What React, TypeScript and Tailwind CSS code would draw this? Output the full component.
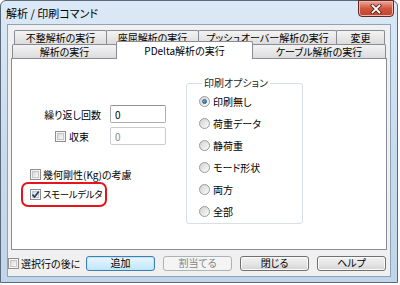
import React from "react";

const CheckBox: React.FC<{ checked?: boolean }> = ({ checked }) => (
    <span className="inline-flex w-[11px] h-[11px] shrink-0 border border-[#8f8f8f] bg-[#f4f4f4] p-px">
        <span className="flex w-full h-full items-center justify-center border border-[#c6c6c6] bg-gradient-to-br from-[#d6d6d6] to-[#fbfbfb]">
            {checked && (
                <svg width="9" height="9" viewBox="0 0 9 9" className="-m-[2px]">
                    <path d="M1.5 4.6 L3.6 7 L7.8 1.4" fill="none" stroke="#1f3f6d" strokeWidth="1.7" />
                </svg>
            )}
        </span>
    </span>
);

const Radio: React.FC<{ checked?: boolean }> = ({ checked }) => (
    <span className="inline-flex w-[11px] h-[11px] shrink-0 items-center justify-center rounded-full border border-[#9a9a9a] bg-gradient-to-br from-[#d2d2d2] to-[#fcfcfc]">
        {checked && (
            <span className="w-[5px] h-[5px] rounded-full bg-gradient-to-br from-[#86c9f0] to-[#1a5f9a] border border-[#2a5f8f]" />
        )}
    </span>
);

const Button: React.FC<{ label: string; variant?: "default" | "disabled" }> = ({ label, variant }) => {
    if (variant === "default") {
        return (
            <div className="w-[69px] h-[15px] rounded-[3px] border border-[#3c7fb1] bg-gradient-to-b from-[#eaf6fd] to-[#bee6fd] flex items-center justify-center leading-none shadow-[inset_0_0_0_1px_#bde6fb]">
                {label}
            </div>
        );
    }
    if (variant === "disabled") {
        return (
            <div className="w-[69px] h-[15px] rounded-[3px] border border-[#adb2b5] bg-[#f4f4f4] text-[#838383] flex items-center justify-center leading-none">
                {label}
            </div>
        );
    }
    return (
        <div className="w-[69px] h-[15px] rounded-[3px] border border-[#707070] bg-gradient-to-b from-[#f2f2f2] via-[#e6e6e6] to-[#d4d4d4] flex items-center justify-center leading-none shadow-[inset_0_0_0_1px_#fbfbfb]">
            {label}
        </div>
    );
};

const tabBase =
    "h-[14px] border border-b-0 border-[#898c95] rounded-t-[2px] bg-gradient-to-b from-[#f3f3f3] to-[#dcdcdc] flex items-center justify-center leading-none";

const App: React.FC = () => {
    const options = ["印刷無し", "荷重データ", "静荷重", "モード形状", "両方", "全部"];

    return (
        <div className="w-[400px] h-[285px] bg-white text-[10px] text-black whitespace-nowrap font-['Noto_Sans_CJK_JP','Noto_Sans',sans-serif] [font-feature-settings:'palt']">
            <div className="w-[398px] h-[283px] rounded-t-[6px] border border-[#5b6a7b] bg-gradient-to-b from-[#dce9f6] via-[#c9dbee] to-[#c1d5ea] flex flex-col">
                {/* title bar */}
                <div className="h-[23px] flex items-start justify-between pl-[5px] pr-[3px]">
                    <span className="text-[11px] leading-none pt-[7px]">解析 / 印刷コマンド</span>
                    <div className="w-[36px] h-[17px] -mt-px rounded-b-[4px] border border-[#5c2a24] bg-gradient-to-b from-[#e9a99c] via-[#d2553f] to-[#c2432d] flex items-center justify-center shadow-[inset_0_0_0_1px_#f0b4a8]">
                        <svg width="12" height="10" viewBox="0 0 12 10">
                            <path d="M2.5 1.5 L9.5 8.5 M9.5 1.5 L2.5 8.5" stroke="#4a1d18" strokeWidth="3.4" strokeLinecap="square" />
                            <path d="M2.5 1.5 L9.5 8.5 M9.5 1.5 L2.5 8.5" stroke="#ffffff" strokeWidth="1.8" strokeLinecap="square" />
                        </svg>
                    </div>
                </div>

                {/* client area */}
                <div className="flex-1 mx-[6px] mb-[5px] bg-[#f0f0f0] border border-[#8fa3b8] flex flex-col">
                    {/* tabs */}
                    <div className="mt-[5px] ml-[6px] flex">
                        <div className={`${tabBase} w-[93px]`}>不整解析の実行</div>
                        <div className={`${tabBase} w-[93px] -ml-px`}>座屈解析の実行</div>
                        <div className={`${tabBase} w-[139px] -ml-px`}>プッシュオーバー解析の実行</div>
                        <div className={`${tabBase} w-[49px] -ml-px`}>変更</div>
                    </div>
                    <div className="ml-[4px] h-[14px] flex items-end">
                        <div className={`${tabBase} w-[105px]`}>解析の実行</div>
                        <div className="relative z-10 -ml-px -mb-px w-[137px] h-[18px] border border-b-0 border-[#898c95] rounded-t-[2px] bg-white flex items-center justify-center leading-none pt-px">
                            PDelta解析の実行
                        </div>
                        <div className={`${tabBase} w-[134px] -ml-px`}>ケーブル解析の実行</div>
                    </div>

                    {/* tab panel */}
                    <div className="mx-[3px] h-[192px] border border-[#898c95] bg-white flex">
                        <div className="w-[174px] flex flex-col pt-[46px]">
                            <div className="flex items-center h-[18px]">
                                <span className="w-[89px] text-right">繰り返し回数</span>
                                <div className="ml-[9px] w-[56px] h-[18px] border border-[#abadb3] border-t-[#8d929a] rounded-[2px] bg-white flex items-center pl-[4px]">
                                    0
                                </div>
                            </div>
                            <div className="flex items-center h-[18px] mt-[4px]">
                                <div className="w-[89px] pl-[43px] flex items-center gap-[3px]">
                                    <CheckBox />
                                    <span>収束</span>
                                </div>
                                <div className="ml-[9px] w-[56px] h-[18px] border border-[#c8cbd0] rounded-[2px] bg-white text-[#8a8a8a] flex items-center pl-[4px]">
                                    0
                                </div>
                            </div>
                            <div className="flex items-center h-[18px] mt-[20px] pl-[18px] gap-[2px]">
                                <CheckBox />
                                <span>幾何剛性(Kg)の考慮</span>
                            </div>
                            <div className="ml-[9px] -mt-px w-[86px] h-[25px] border-2 border-[#e8141b] rounded-[7px] flex items-center pl-[7px] gap-[2px]">
                                <CheckBox checked />
                                <span className="text-[9.5px] tracking-[-0.4px]">スモールデルタ</span>
                            </div>
                        </div>

                        <fieldset className="mt-[17px] w-[117px] h-[148px] border border-[#d5dfe5] rounded-[3px] pl-[12px] pb-px">
                            <legend className="ml-[3px] px-[2px] leading-[14px] text-[#1e1e1e]">印刷オプション</legend>
                            {options.map((opt, i) => (
                                <div key={opt} className="h-[22px] flex items-center gap-[3px]">
                                    <Radio checked={i === 0} />
                                    <span>{opt}</span>
                                </div>
                            ))}
                        </fieldset>
                    </div>

                    {/* bottom bar */}
                    <div className="flex-1 flex items-center">
                        <div className="w-[78px] flex items-center gap-[2px]">
                            <CheckBox />
                            <span>選択行の後に</span>
                        </div>
                        <div className="flex gap-[8px]">
                            <Button label="追加" variant="default" />
                            <Button label="割当てる" variant="disabled" />
                            <Button label="閉じる" />
                            <Button label="ヘルプ" />
                        </div>
                    </div>
                </div>
            </div>
        </div>
    );
};

export default App;
